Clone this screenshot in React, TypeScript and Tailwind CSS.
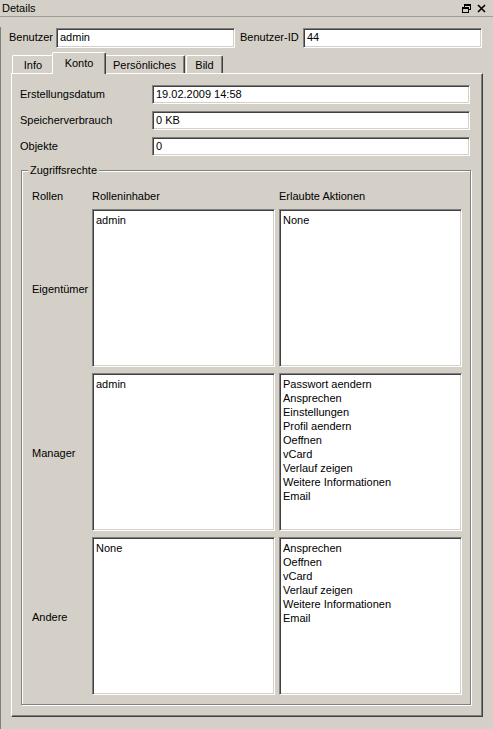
import React from "react";

const sunken =
  "bg-white border border-t-[#808080] border-l-[#808080] border-b-white border-r-white shadow-[inset_1px_1px_0_#404040,inset_-1px_-1px_0_#d4d0c8]";

function Field({ value, className }: { value: string; className: string }) {
  return (
    <div className={`${sunken} ${className} flex items-center pl-[3px] leading-none`}>
      {value}
    </div>
  );
}

function ListBox({ items }: { items: string[] }) {
  return (
    <div className={`${sunken} h-[158px] w-[183px] pl-[3px] pt-[3px]`}>
      {items.map((it) => (
        <div key={it} className="h-[14px] leading-[14px]">
          {it}
        </div>
      ))}
    </div>
  );
}

function Tab({ label, width, active }: { label: string; width: string; active?: boolean }) {
  return (
    <div
      className={`${width} ${
        active
          ? "relative z-10 h-[22px] -mb-[1px] -mx-[2px] pb-[1px]"
          : "h-[18px] pt-[2px]"
      } flex items-center justify-center rounded-t-[2px] border-t border-l border-t-white border-l-white border-r border-r-[#404040] bg-[#d4d0c8] shadow-[inset_-1px_0_0_#808080]`}
    >
      {label}
    </div>
  );
}

const rows: { role: string; holders: string[]; actions: string[] }[] = [
  { role: "Eigentümer", holders: ["admin"], actions: ["None"] },
  {
    role: "Manager",
    holders: ["admin"],
    actions: [
      "Passwort aendern",
      "Ansprechen",
      "Einstellungen",
      "Profil aendern",
      "Oeffnen",
      "vCard",
      "Verlauf zeigen",
      "Weitere Informationen",
      "Email",
    ],
  },
  {
    role: "Andere",
    holders: ["None"],
    actions: ["Ansprechen", "Oeffnen", "vCard", "Verlauf zeigen", "Weitere Informationen", "Email"],
  },
];

export default function App() {
  return (
    <div className="w-[493px] h-[729px] overflow-hidden bg-[#d4d0c8] font-['Liberation_Sans',Arial,sans-serif] text-[11px] text-black">
      {/* title bar */}
      <div className="flex h-[17px] items-center justify-between border-b border-[#a09d96] pl-[2px] pr-[7px]">
        <span>Details</span>
        <div className="flex items-center gap-[6px]">
          <svg width="9" height="9" viewBox="0 0 9 9" aria-hidden="true">
            <rect x="2.5" y="0.5" width="6" height="5" fill="none" stroke="#000" />
            <rect x="2" y="0" width="7" height="2" fill="#000" />
            <rect x="0.5" y="3.5" width="6" height="5" fill="#d4d0c8" stroke="#000" />
            <rect x="0" y="3" width="7" height="2" fill="#000" />
          </svg>
          <svg width="9" height="9" viewBox="0 0 9 9" aria-hidden="true">
            <path d="M1 1 L8 8 M8 1 L1 8" stroke="#000" strokeWidth="1.6" />
          </svg>
        </div>
      </div>

      <div className="h-[711px] border-l border-[#808080]">
        {/* user row */}
        <div className="mt-[10px] flex h-[20px] items-center pl-[8px] pt-[1px]">
          <span className="w-[47px]">Benutzer</span>
          <Field value="admin" className="h-[20px] w-[179px]" />
          <span className="ml-[5px] w-[63px]">Benutzer-ID</span>
          <Field value="44" className="h-[20px] w-[179px]" />
        </div>

        {/* tabs */}
        <div className="ml-[11px] mt-[5px] flex h-[21px] items-end">
          <Tab label="Info" width="w-[42px]" />
          <Tab label="Konto" width="w-[54px]" active />
          <Tab label="Persönliches" width="w-[81px]" />
          <div className="w-[1px]" />
          <Tab label="Bild" width="w-[37px]" />
        </div>

        {/* tab panel */}
        <div className="ml-[10px] h-[644px] w-[472px] border border-t-white border-l-white border-r-[#404040] border-b-[#404040] shadow-[inset_-1px_-1px_0_#808080]">
          <div className="flex flex-col gap-[7px] pl-[8px] pt-[11px]">
            {[
              ["Erstellungsdatum", "19.02.2009 14:58"],
              ["Speicherverbrauch", "0 KB"],
              ["Objekte", "0"],
            ].map(([label, value]) => (
              <div key={label} className="flex h-[19px] items-center">
                <span className="w-[132px]">{label}</span>
                <Field value={value} className="h-[19px] w-[318px]" />
              </div>
            ))}
          </div>

          {/* group box */}
          <div className="relative ml-[9px] mt-[14px] h-[535px] w-[450px] border border-[#808080] shadow-[1px_1px_0_#fff,inset_1px_1px_0_#fff]">
            <span className="absolute -top-[7px] left-[6px] bg-[#d4d0c8] px-[2px] leading-[13px]">
              Zugriffsrechte
            </span>
            <div className="pl-[10px] pt-[19px]">
              <div className="flex h-[13px] items-center leading-[13px]">
                <span className="w-[60px]">Rollen</span>
                <span className="w-[187px]">Rolleninhaber</span>
                <span>Erlaubte Aktionen</span>
              </div>
              <div className="mt-[6px] flex flex-col gap-[6px]">
                {rows.map((r) => (
                  <div key={r.role} className="flex items-center">
                    <span className="w-[60px] pt-[2px]">{r.role}</span>
                    <div className="flex gap-[4px]">
                      <ListBox items={r.holders} />
                      <ListBox items={r.actions} />
                    </div>
                  </div>
                ))}
              </div>
            </div>
          </div>
        </div>
      </div>
    </div>
  );
}
